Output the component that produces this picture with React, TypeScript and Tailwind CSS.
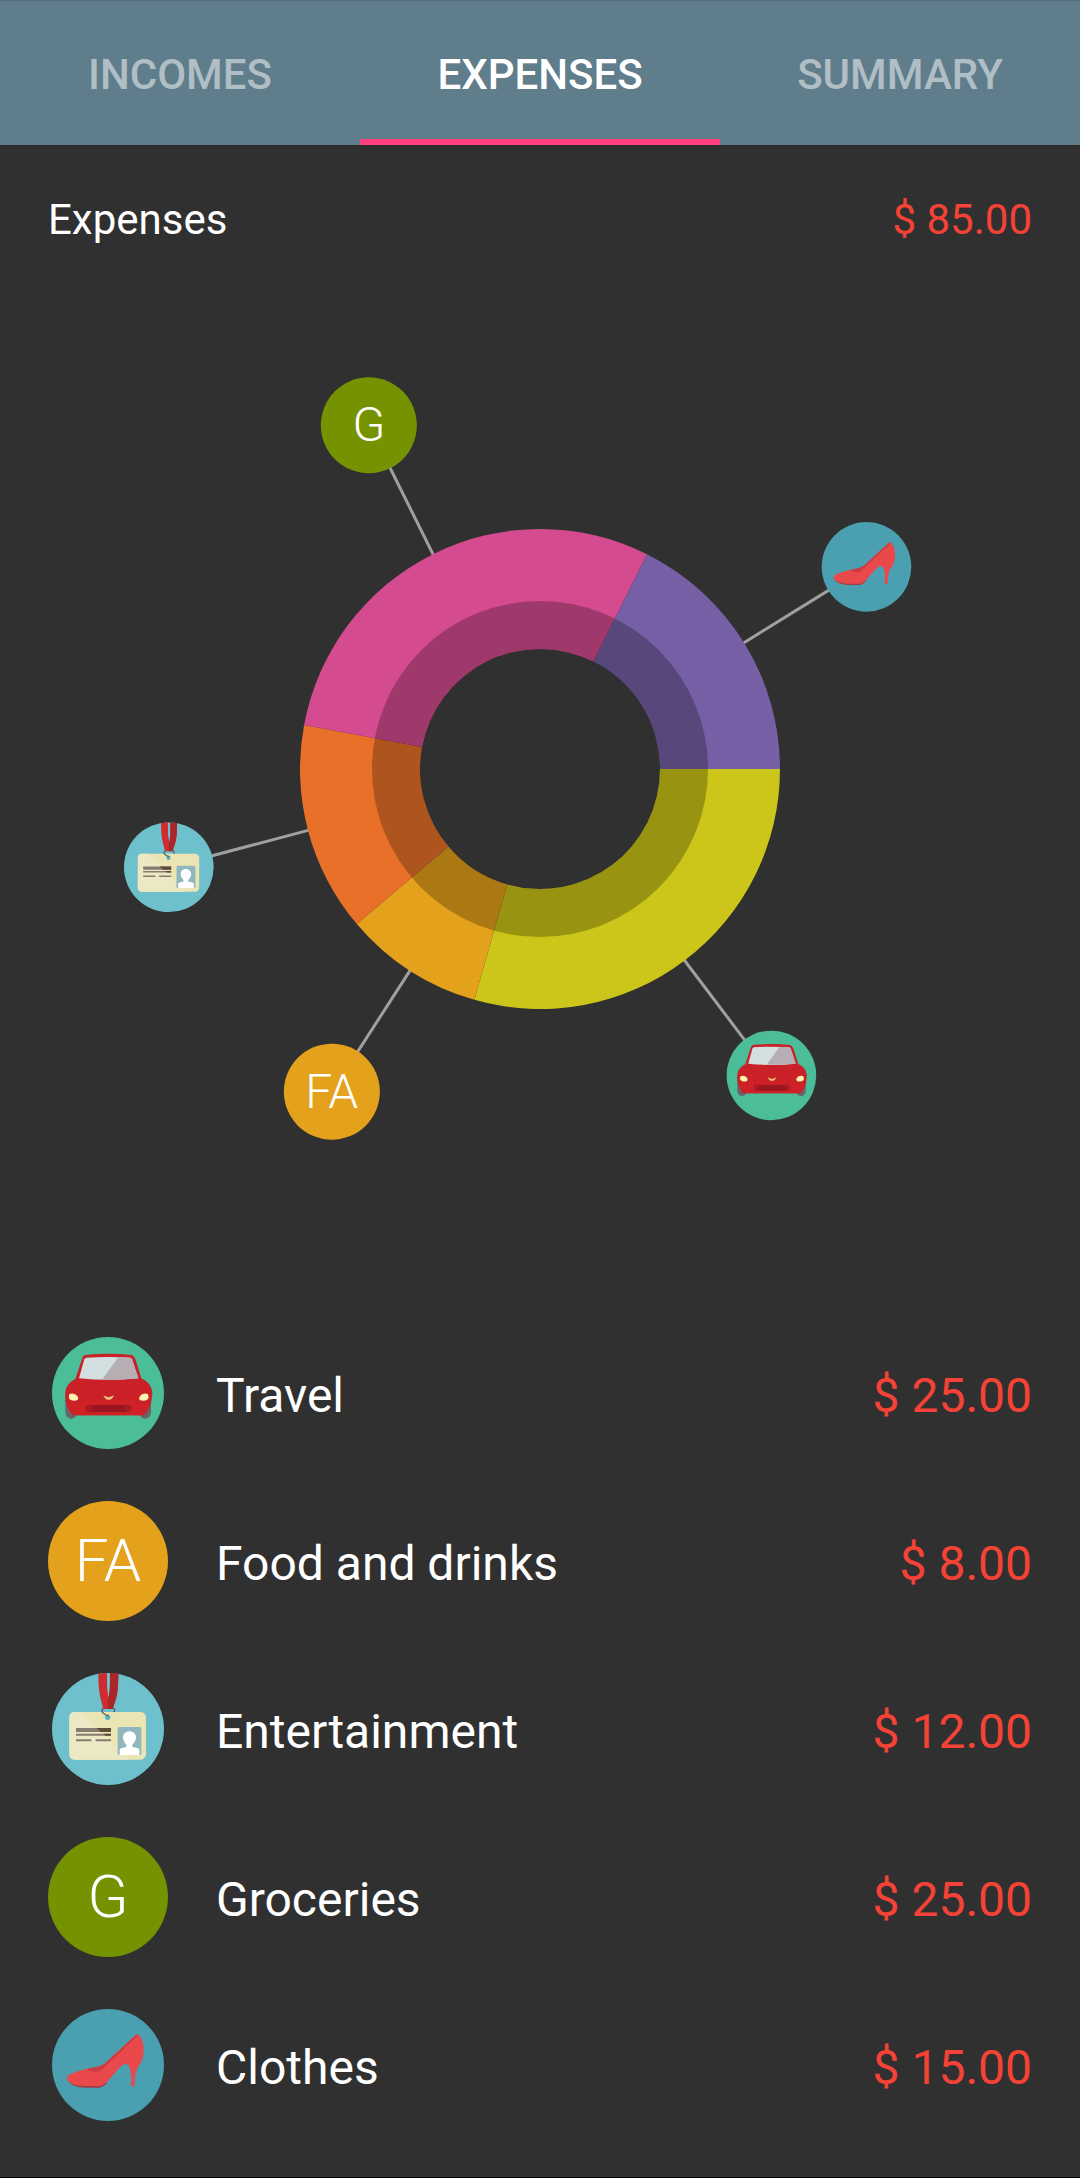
import { useState, type ReactNode } from "react";

type Category = {
  name: string;
  amount: number;
  slice: string;
  letters?: string;
  badge: string;
  art?: ReactNode;
};

const CarArt = () => (
  <g transform="scale(0.3333) translate(-236 -220)">
    <path d="M108 225h36v52a18 20 0 0 1-36 0zM329 225h36v52a18 20 0 0 1-36 0z" fill="#6b6468" />
    <path d="M166 106Q237 99 307 106Q315 109 320 124L336 176Q366 190 369 218Q369 244 359 266L350 280Q345 287 336 287H139Q130 287 125 280L116 266Q106 244 108 216Q112 190 138 178L156 124Q160 109 166 106z" fill="#c92127" />
    <path d="M145 184Q150 222 172 240Q237 247 302 240Q326 222 331 184Q334 222 312 246Q340 258 364 248L350 280Q345 287 336 287H139Q130 287 125 280L112 248Q140 256 163 246Q142 220 145 184z" fill="#d02127" />
    <path d="M170 114Q237 110 303 114L308 119L327 176Q237 185 149 176L165 119z" fill="#d3dfe1" />
    <path d="M267 112Q290 112 303 114Q307 116 309 122L327 176Q270 181 218 180z" fill="#b7aeb4" />
    <rect x="169" y="255" width="138" height="23" rx="11" fill="#aa1b22" />
    <rect x="190" y="258" width="97" height="18" fill="#97151e" />
    <path d="M222 227L234 232H241L254 227Q250 238 243 240H233Q226 238 222 227z" fill="#efc07b" />
    <path d="M120 223Q136 218 144 229Q153 243 133 243Q116 242 119 228zM356 223Q340 218 332 229Q323 243 343 243Q361 242 357 228z" fill="#fff2ae" />
  </g>
);

const PassArt = () => (
  <g transform="scale(0.3333) translate(-236 -223)">
    <path d="M207 58Q219 55 233 55V100L238 130L242 100V55Q256 55 267 58Q267 110 260 132L250 163H222L214 132Q207 108 207 58z" fill="#cf2c31" />
    <path d="M242 55Q256 55 267 58Q267 110 260 132L250 163H237L235 145Q243 120 242 55z" fill="#a9262b" />
    <rect x="120" y="172" width="230" height="143" rx="16" fill="#ebe4b3" />
    <path d="M136 172Q120 172 120 188V299Q120 315 136 315H300L156 172z" fill="#ece8c4" />
    <circle cx="235" cy="188" r="8" fill="#56b2bd" />
    <path d="M224 161Q214 164 220 174Q227 182 238 183M251 160Q259 164 254 172" fill="none" stroke="#4f5558" strokeWidth="4" />
    <path d="M140 220H245V232H140zM140 237H245V243H140zM140 254H186V260H140zM199 254H245V260H199z" fill="#857c6e" />
    <path d="M202 220H245V232H214zM222 237H245V243H229z" fill="#5d4b3b" />
    <rect x="265" y="217" width="71" height="84" rx="5" fill="#90b7bd" />
    <path d="M300 230C288 230 280 239 281 250C282 259 287 266 291 270V277Q274 279 271 284V301H330V284Q327 279 309 277V270C314 266 319 258 320 250C321 239 312 230 300 230z" fill="#fff" />
  </g>
);

const ShoeArt = () => (
  <g transform="scale(0.3333) translate(-236 -226)">
    <path d="M113 267Q122 292 165 294H210Q224 291 234 280L230 275L120 272z" fill="#a23c48" />
    <path d="M326 132Q346 154 343 188Q342 212 326 232Q317 244 315 290H305Q307 244 299 229Q289 214 270 235L236 273Q224 288 209 289H165Q125 288 113 270Q110 257 132 250Q161 238 211 230Q220 226 235 213L315 139z" fill="#e9494b" />
    <path d="M320 137L225 223Q212 231 174 238Q183 248 202 247Q217 244 229 229L325 139z" fill="#cc3d43" />
  </g>
);

const CATEGORIES: Category[] = [
  { name: "Travel", amount: 25, slice: "#cbc619", badge: "#4bbd98", art: <CarArt /> },
  { name: "Food and drinks", amount: 8, slice: "#e4a11b", badge: "#e4a11b", letters: "FA" },
  { name: "Entertainment", amount: 12, slice: "#e87029", badge: "#6ec1cc", art: <PassArt /> },
  { name: "Groceries", amount: 25, slice: "#d54b8f", badge: "#759300", letters: "G" },
  { name: "Clothes", amount: 15, slice: "#765fa5", badge: "#4a9fb0", art: <ShoeArt /> },
];

const TABS = ["INCOMES", "EXPENSES", "SUMMARY"];
const money = (value: number) => `$ ${value.toFixed(2)}`;
const total = CATEGORIES.reduce((sum, c) => sum + c.amount, 0);

// A badge is centred on the origin of a 120-unit square.
function Badge({ category }: { category: Category }) {
  return (
    <>
      <circle r={category.letters ? 60 : 56} fill={category.badge} />
      {category.letters ? (
        <text y="20" textAnchor="middle" fontSize="60" fontWeight="300" fill="#fff">
          {category.letters}
        </text>
      ) : (
        category.art
      )}
    </>
  );
}

const CX = 540;
const CY = 475;
const point = (radius: number, angle: number) => ({
  x: CX + radius * Math.cos(angle),
  y: CY + radius * Math.sin(angle),
});

function ringPath(inner: number, outer: number, from: number, to: number) {
  const a = point(outer, from);
  const b = point(outer, to);
  const c = point(inner, to);
  const d = point(inner, from);
  const large = to - from > Math.PI ? 1 : 0;
  return `M${a.x} ${a.y}A${outer} ${outer} 0 ${large} 1 ${b.x} ${b.y}L${c.x} ${c.y}A${inner} ${inner} 0 ${large} 0 ${d.x} ${d.y}Z`;
}

function DonutChart() {
  let cursor = 0;
  const slices = CATEGORIES.map((category) => {
    const from = cursor;
    cursor += (category.amount / total) * Math.PI * 2;
    return { category, from, to: cursor, mid: (from + cursor) / 2 };
  });
  return (
    <svg viewBox="0 0 1080 950" className="block w-full" role="img" aria-label="Expenses by category">
      {slices.map(({ category, from, to, mid }) => {
        const start = point(239, mid);
        const end = point(384, mid);
        return (
          <g key={category.name}>
            <line x1={start.x} y1={start.y} x2={end.x} y2={end.y} stroke="#a0a0a0" strokeWidth="3" />
            <path d={ringPath(120, 240, from, to)} fill={category.slice} />
            <g transform={`translate(${end.x} ${end.y}) scale(0.8)`}>
              <Badge category={category} />
            </g>
          </g>
        );
      })}
      <circle cx={CX} cy={CY} r="144" fill="none" stroke="#000" strokeOpacity="0.25" strokeWidth="48" />
    </svg>
  );
}

export default function App() {
  const [active, setActive] = useState("EXPENSES");
  return (
    <div className="min-h-screen border-b border-black bg-[#303030] font-['Roboto',sans-serif] text-white">
      <div role="tablist" className="grid h-[145px] grid-cols-3 border-t border-[#566f7c] bg-[#607d8b] shadow-sm">
        {TABS.map((tab) => (
          <button
            key={tab}
            role="tab"
            aria-selected={tab === active}
            onClick={() => setActive(tab)}
            className={`border-b-6 pt-2.5 text-[42px] leading-[50px] font-medium ${
              tab === active ? "border-[#ff4081] text-white" : "border-transparent text-[#b0bec5]"
            }`}
          >
            {tab}
          </button>
        ))}
      </div>
      <main>
        <header className="flex items-center justify-between px-12 py-[50px] text-[42px] leading-[49px]">
          <h1>Expenses</h1>
          <span className="text-[#f44336]">{money(total)}</span>
        </header>
        <DonutChart />
        <ul className="mt-[68px]">
          {CATEGORIES.map((category) => (
            <li key={category.name} className="flex h-[168px] items-center px-12 text-[48px] leading-[56px]">
              <svg viewBox="-60 -60 120 120" className="mr-12 mb-1.5 size-[120px] shrink-0" aria-hidden="true">
                <Badge category={category} />
              </svg>
              <span className="grow">{category.name}</span>
              <span className="text-[#f44336]">{money(category.amount)}</span>
            </li>
          ))}
        </ul>
      </main>
    </div>
  );
}
